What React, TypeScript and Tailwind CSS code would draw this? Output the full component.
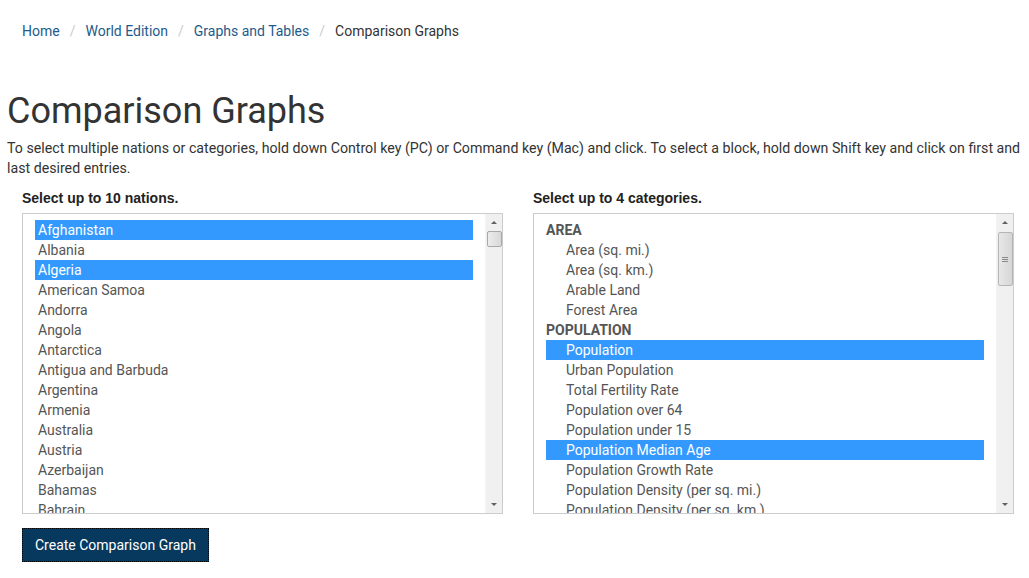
import React from 'react'

type Row = { label: string; selected?: boolean; group?: boolean; indent?: boolean }

const nations: Row[] = [
  { label: 'Afghanistan', selected: true },
  { label: 'Albania' },
  { label: 'Algeria', selected: true },
  { label: 'American Samoa' },
  { label: 'Andorra' },
  { label: 'Angola' },
  { label: 'Antarctica' },
  { label: 'Antigua and Barbuda' },
  { label: 'Argentina' },
  { label: 'Armenia' },
  { label: 'Australia' },
  { label: 'Austria' },
  { label: 'Azerbaijan' },
  { label: 'Bahamas' },
  { label: 'Bahrain' },
  { label: 'Bangladesh' },
]

const categories: Row[] = [
  { label: 'AREA', group: true },
  { label: 'Area (sq. mi.)', indent: true },
  { label: 'Area (sq. km.)', indent: true },
  { label: 'Arable Land', indent: true },
  { label: 'Forest Area', indent: true },
  { label: 'POPULATION', group: true },
  { label: 'Population', indent: true, selected: true },
  { label: 'Urban Population', indent: true },
  { label: 'Total Fertility Rate', indent: true },
  { label: 'Population over 64', indent: true },
  { label: 'Population under 15', indent: true },
  { label: 'Population Median Age', indent: true, selected: true },
  { label: 'Population Growth Rate', indent: true },
  { label: 'Population Density (per sq. mi.)', indent: true },
  { label: 'Population Density (per sq. km.)', indent: true },
  { label: 'Birth Rate', indent: true },
]

// fake windows-style scrollbar
const ScrollBar: React.FC<{ big?: boolean }> = ({ big }) => (
  <div className="w-[17px] shrink-0 bg-[#f0f0f0] flex flex-col items-center border-l border-[#f4f4f4]">
    <div className="h-[17px] w-full flex items-center justify-center">
      <span className="block w-0 h-0 border-l-[3px] border-r-[3px] border-b-[3px] border-l-transparent border-r-transparent border-b-[#606060]" />
    </div>
    {big ? (
      <div className="w-[15px] h-[54px] mt-[1px] rounded-[2px] border border-[#b5b5b5] bg-gradient-to-r from-[#e8e8e8] to-[#d6d6d6] flex flex-col items-center justify-center gap-[1px]">
        <span className="block w-[6px] h-[1px] bg-[#8a8a8a]" />
        <span className="block w-[6px] h-[1px] bg-[#8a8a8a]" />
        <span className="block w-[6px] h-[1px] bg-[#8a8a8a]" />
      </div>
    ) : (
      <div className="w-[15px] h-[16px] rounded-[2px] border border-[#a8a8a8] bg-gradient-to-r from-[#ececec] to-[#d8d8d8]" />
    )}
    <div className="flex-1" />
    <div className="h-[17px] w-full flex items-center justify-center">
      <span className="block w-0 h-0 border-l-[3px] border-r-[3px] border-t-[3px] border-l-transparent border-r-transparent border-t-[#606060]" />
    </div>
  </div>
)

const ListBox: React.FC<{ rows: Row[]; big?: boolean }> = ({ rows, big }) => (
  <div className="h-[301px] border border-[#cccccc] bg-white flex overflow-hidden">
    <div className="flex-1 overflow-hidden pt-[6px] pl-[12px] pr-[12px]">
      {rows.map((r) => (
        <div
          key={r.label}
          className={
            'h-[20px] leading-[20px] text-[14px] whitespace-nowrap ' +
            (r.selected ? 'bg-[#3399ff] text-white ' : 'text-[#555555] ') +
            (r.group ? 'font-bold text-[#333333] ' : '') +
            (r.indent ? 'pl-[20px]' : r.group ? '' : 'pl-[3px]')
          }
        >
          {r.label}
        </div>
      ))}
    </div>
    <ScrollBar big={big} />
  </div>
)

const App: React.FC = () => {
  return (
    <div className="min-h-screen bg-white font-['Roboto',sans-serif] text-[#333333] px-[7px]">
      {/* Breadcrumb */}
      <ol className="flex items-center text-[14px] px-[15px] pt-[21px] pb-[8px]">
        <li className="text-[#1d5b8c]">Home</li>
        <li className="px-[10px] text-[#cccccc]">/</li>
        <li className="text-[#1d5b8c]">World Edition</li>
        <li className="px-[10px] text-[#cccccc]">/</li>
        <li className="text-[#1d5b8c]">Graphs and Tables</li>
        <li className="px-[10px] text-[#cccccc]">/</li>
        <li className="text-[#333333]">Comparison Graphs</li>
      </ol>

      <h1 className="text-[36px] leading-[40px] mt-[41px] text-[#333333]">Comparison Graphs</h1>
      <p className="text-[14.2px] leading-[20px] mt-[7px]">
        To select multiple nations or categories, hold down Control key (PC) or Command key (Mac) and click. To select a block, hold down Shift key and click on first and last desired entries.
      </p>

      <div className="grid grid-cols-2 gap-[30px] pl-[15px] pr-[8px] mt-[10px]">
        <div>
          <div className="text-[14px] font-bold leading-[20px] mb-[5px] text-[#222222] font-['Liberation_Sans',sans-serif]">Select up to 10 nations.</div>
          <ListBox rows={nations} />
        </div>
        <div>
          <div className="text-[14px] font-bold leading-[20px] mb-[5px] text-[#222222] font-['Liberation_Sans',sans-serif]">Select up to 4 categories.</div>
          <ListBox rows={categories} big />
        </div>
      </div>

      <div className="px-[15px] mt-[14px]">
        <button className="h-[34px] px-[12px] bg-[#07385e] text-white text-[14px] border border-dotted border-black">
          Create Comparison Graph
        </button>
      </div>
    </div>
  )
}

export default App
